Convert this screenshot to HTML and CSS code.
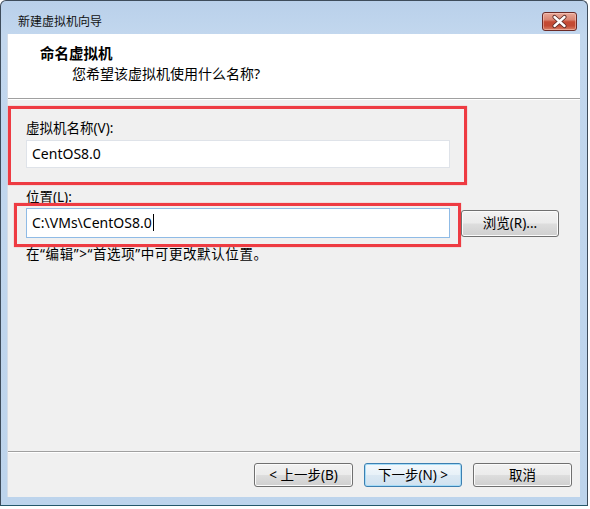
FILE: index.html
```html
<!DOCTYPE html>
<html lang="zh-CN">
<head>
<meta charset="utf-8">
<title>新建虚拟机向导</title>
<link rel="stylesheet" href="styles.css">
</head>
<body>
<div class="window">
  <div class="titlebar">
    <span class="title">新建虚拟机向导</span>
    <button class="close" aria-label="关闭">
      <svg width="35" height="19" viewBox="0 0 35 19">
        <path d="M12.5 5 L22.5 14 M22.5 5 L12.5 14" stroke="#5a2a25" stroke-width="4.2" stroke-linecap="round" fill="none"/>
        <path d="M12.5 5 L22.5 14 M22.5 5 L12.5 14" stroke="#ffffff" stroke-width="2.4" stroke-linecap="round" fill="none"/>
      </svg>
    </button>
  </div>
  <div class="client">
    <div class="header">
      <div class="h-title">命名虚拟机</div>
      <div class="h-sub">您希望该虚拟机使用什么名称?</div>
    </div>
    <div class="body">
      <div class="mark mark-name">
        <div class="label">虚拟机名称(V):</div>
        <div class="input input-name">CentOS8.0</div>
      </div>
      <div class="label label-loc">位置(L):</div>
      <div class="loc-row">
        <div class="mark mark-loc">
          <div class="input input-loc">C:\VMs\CentOS8.0<span class="caret"></span></div>
        </div>
        <button class="btn browse">浏览(R)...</button>
      </div>
      <div class="hint">在“编辑”&gt;“首选项”中可更改默认位置。</div>
    </div>
    <div class="footer">
      <button class="btn btn-back">&lt; 上一步(B)</button>
      <button class="btn btn-next">下一步(N) &gt;</button>
      <button class="btn btn-cancel">取消</button>
    </div>
  </div>
</div>
</body>
</html>
```

FILE: styles.css
```css
* { box-sizing: border-box; }

html, body {
  margin: 0;
  padding: 0;
  background: #ffffff;
}

body {
  width: 590px;
  height: 509px;
  overflow: hidden;
  font-family: "Noto Sans", "Noto Sans CJK SC", sans-serif;
  font-size: 13.5px;
  color: #000;
}

.window {
  width: 588px;
  height: 506px;
  border: 1px solid #3e4c5b;
  border-bottom-color: #24586b;
  border-radius: 6px 6px 0 0;
  background: linear-gradient(180deg, #b9d0ea 0px, #c2d7ee 34px, #bdd4ec 100%);
  padding: 0 7px 8px 6px;
  display: flex;
  flex-direction: column;
}

.titlebar {
  height: 33px;
  display: flex;
  align-items: flex-end;
  justify-content: space-between;
  padding: 0 3px 3px 11px;
}

.title {
  font-size: 12px;
  line-height: 19px;
  color: #111;
}

.close {
  width: 35px;
  height: 19px;
  padding: 0;
  margin: 0;
  border: 1px solid #6b2b27;
  border-radius: 3px;
  background: linear-gradient(180deg, #e9a898 0%, #d98572 40%, #c54a33 52%, #c24a34 75%, #da8168 100%);
  box-shadow: inset 0 0 0 1px rgba(255, 220, 210, 0.45);
  display: flex;
  align-items: center;
  justify-content: center;
}

.close svg { display: block; margin: -1px; }

.client {
  flex: 1;
  display: flex;
  flex-direction: column;
  background: #f0f0f0;
  border-left: 1px solid #d4dde8;
}

.header {
  height: 65px;
  background: #ffffff;
  border-bottom: 1px solid #a0a0a0;
  padding: 10px 0 0 32px;
}

.h-title {
  font-size: 14.5px;
  font-weight: bold;
  line-height: 18px;
}

.h-sub {
  font-size: 14px;
  line-height: 18px;
  margin: 3px 0 0 32px;
}

.body {
  flex: 1;
  border-top: 1px solid #ffffff;
  padding: 6px 0 0 0;
}

.mark {
  border: 3px solid #ee3b42;
  box-shadow: 0 0 1px rgba(238, 59, 66, 0.6);
}

.mark-name {
  width: 459px;
  height: 79px;
  padding: 11px 14px 0 15px;
}

.label {
  line-height: 16px;
  white-space: nowrap;
}

.input {
  width: 424px;
  background: #ffffff;
  border: 1px solid #dfe3e9;
  padding-left: 5px;
  font-size: 14px;
  white-space: nowrap;
  display: flex;
  align-items: center;
}

.input-name {
  height: 28px;
  margin-top: 4px;
  padding-bottom: 2px;
}

.label-loc {
  margin: 5px 0 0 18px;
  line-height: 14px;
}

.loc-row {
  display: flex;
  align-items: flex-start;
  margin: -1px 0 0 6px;
}

.mark-loc {
  width: 447px;
  padding: 2px 8px 6px 9px;
}

.input-loc {
  height: 30px;
  border-color: #8fbbe6;
  padding-bottom: 1px;
}

.caret {
  display: inline-block;
  width: 1px;
  height: 17px;
  background: #000;
  margin-left: 1px;
}

.hint {
  margin-left: 18px;
  line-height: 14px;
  letter-spacing: 0.6px;
  white-space: nowrap;
}

.btn {
  font-family: inherit;
  font-size: 13.5px;
  color: #000;
  height: 24px;
  padding: 0 0 1px 0;
  border: 1px solid #707070;
  border-radius: 3px;
  background: linear-gradient(180deg, #f2f2f2 0%, #ebebeb 48%, #dddddd 52%, #cfcfcf 100%);
  box-shadow: inset 0 0 0 1px #fbfbfb;
  line-height: 20px;
}

.browse {
  width: 98px;
  height: 27px;
  margin-top: 7px;
  flex: none;
}

.footer {
  height: 46px;
  border-top: 1px solid #a0a0a0;
  box-shadow: inset 0 1px 0 #ffffff;
  display: flex;
  justify-content: flex-end;
  align-items: flex-start;
  gap: 11px;
  padding: 11px 8px 0 0;
}

.btn-back { width: 99px; }
.btn-next {
  width: 98px;
  border-color: #3c7fb1;
  background: linear-gradient(180deg, #f3f8fc 0%, #e8f1f8 48%, #dbe8f3 52%, #d0e2f0 100%);
  box-shadow: inset 0 0 0 1px #a6dcf7;
}
.btn-cancel { width: 99px; }
```
